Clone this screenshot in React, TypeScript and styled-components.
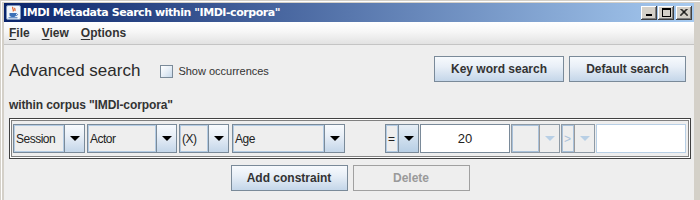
import React from 'react';
import styled, { createGlobalStyle } from 'styled-components';

const GlobalStyle = createGlobalStyle`
  html, body {
    margin: 0;
    padding: 0;
    background: #d4d0c8;
  }
  body {
    font-family: 'Liberation Sans', Arial, sans-serif;
  }
`;

const Frame = styled.div`
  width: 700px;
  height: 200px;
  box-sizing: border-box;
  padding: 3px 6px 0 4px;
  background: #d4d0c8;
  box-shadow: inset 1px 1px 0 #d4d0c8, inset 2px 2px 0 #fff;
  display: flex;
  flex-direction: column;
  overflow: hidden;
`;

const TitleBar = styled.div`
  height: 19px;
  display: flex;
  align-items: center;
  padding: 0 2px 0 2px;
  background: linear-gradient(to right, #0a246a 0%, #a6caf0 100%);
`;

const TitleText = styled.span`
  margin-left: 2px;
  color: #fff;
  font-family: 'DejaVu Sans', Verdana, sans-serif;
  font-weight: bold;
  font-size: 11px;
  letter-spacing: -0.45px;
  white-space: nowrap;
`;

const WinButtons = styled.div`
  margin-left: auto;
  display: flex;
  align-items: center;
`;

const WinButton = styled.div<{ $gap?: number }>`
  width: 16px;
  height: 14px;
  box-sizing: border-box;
  margin-left: ${p => p.$gap ?? 0}px;
  background: #d4d0c8;
  box-shadow: inset -1px -1px 0 #404040, inset 1px 1px 0 #fff, inset -2px -2px 0 #808080;
  display: flex;
  align-items: center;
  justify-content: center;
`;

const MenuBar = styled.div`
  height: 22px;
  display: flex;
  align-items: center;
  background: linear-gradient(to bottom, #ffffff 0%, #f6f6f6 45%, #e2e2e2 100%);
  border-bottom: 1px solid #c4c4c4;
`;

const MenuItem = styled.span`
  padding: 0 6px;
  font-size: 12px;
  font-weight: bold;
  color: #333;
  &:first-child {
    padding-left: 5px;
  }
  & > u {
    text-decoration-thickness: 1px;
    text-underline-offset: 2px;
  }
`;

const Body = styled.div`
  flex: 1;
  background: #eeeeee;
  padding: 11px 3px 0 5px;
  display: flex;
  flex-direction: column;
`;

const TopRow = styled.div`
  display: flex;
  align-items: center;
  height: 26px;
  padding-right: 5px;
`;

const Heading = styled.span`
  font-size: 17px;
  color: #2a2a2a;
  margin-top: 3px;
`;

const CheckBox = styled.span`
  width: 13px;
  height: 13px;
  box-sizing: border-box;
  margin-left: 20px;
  margin-top: 4px;
  border: 1px solid #7a8a99;
  background: linear-gradient(to bottom right, #ffffff 0%, #e6eef6 50%, #c6d8ea 100%);
`;

const CheckLabel = styled.span`
  margin-left: 5px;
  margin-top: 4px;
  font-size: 11px;
  color: #333;
`;

const ButtonGroup = styled.div`
  margin-left: auto;
  display: flex;
  gap: 5px;
`;

const Button = styled.button<{ $width: number; $disabled?: boolean }>`
  width: ${p => p.$width}px;
  height: 26px;
  box-sizing: border-box;
  padding: 0;
  border: 1px solid ${p => (p.$disabled ? '#a0a0a0' : '#7a8a99')};
  border-radius: 0;
  background: ${p =>
    p.$disabled
      ? '#eeeeee'
      : 'linear-gradient(to bottom, #f7fafd 0%, #e8eff7 40%, #c4d6e9 100%)'};
  font-family: 'Liberation Sans', Arial, sans-serif;
  font-size: 12px;
  font-weight: bold;
  color: ${p => (p.$disabled ? '#9a9a9a' : '#333')};
`;

const CorpusLabel = styled.div`
  margin-top: 16px;
  height: 14px;
  line-height: 14px;
  font-size: 12px;
  font-weight: bold;
  letter-spacing: -0.1px;
  color: #333;
`;

const Panel = styled.div`
  margin-top: 6px;
  border: 1px solid #404040;
  box-shadow: inset 0 0 0 1px #ffffff, inset 0 0 0 2px #808080;
  padding: 5px 3px 5px 3px;
  display: flex;
`;

const ComboBox = styled.div<{ $width: number; $gap: number; $disabled?: boolean }>`
  width: ${p => p.$width}px;
  margin-left: ${p => p.$gap}px;
  height: 29px;
  box-sizing: border-box;
  display: flex;
  border: 1px solid ${p => (p.$disabled ? '#8e9aa5' : '#7a8a99')};
  background: #eeeeee;
`;

const ComboText = styled.div<{ $disabled?: boolean }>`
  flex: 1;
  display: flex;
  align-items: center;
  padding-left: 2px;
  box-shadow: inset 0 0 0 1px ${p => (p.$disabled ? '#a9c1da' : '#b3cbe3')};
  font-size: 12px;
  letter-spacing: -0.5px;
  color: ${p => (p.$disabled ? '#a9c1da' : '#222')};
  white-space: nowrap;
  overflow: hidden;
`;

const ComboArrow = styled.div<{ $disabled?: boolean; $strong?: boolean }>`
  width: 19px;
  border-left: 1px solid ${p => (p.$disabled ? '#9a9a9a' : '#7a8a99')};
  display: flex;
  align-items: center;
  justify-content: center;
  background: ${p =>
    p.$disabled
      ? '#eeeeee'
      : p.$strong
      ? 'linear-gradient(to bottom, #e6eef6 0%, #b8cfe5 100%)'
      : 'linear-gradient(to bottom, #f7fafd 0%, #e8eff7 40%, #c4d6e9 100%)'};
`;

const Triangle = styled.span<{ $disabled?: boolean }>`
  width: 0;
  height: 0;
  border-left: 5px solid transparent;
  border-right: 5px solid transparent;
  border-top: 5px solid ${p => (p.$disabled ? '#b8cfe5' : '#000')};
`;

const TextField = styled.div<{ $width: number; $gap: number; $disabled?: boolean }>`
  width: ${p => p.$width}px;
  margin-left: ${p => p.$gap}px;
  height: 29px;
  box-sizing: border-box;
  border: 1px solid ${p => (p.$disabled ? '#b8cfe5' : '#7a8a99')};
  background: #fff;
  display: flex;
  align-items: center;
  justify-content: center;
  font-size: 13px;
  color: #222;
`;

const BottomRow = styled.div`
  margin-top: 6px;
  display: flex;
  justify-content: center;
  gap: 5px;
`;

const JavaIcon = () => (
  <svg width="15" height="15" viewBox="0 0 15 15">
    <rect x="0.5" y="0.5" width="14" height="14" rx="1.5" fill="#f2f6fb" stroke="#7c95bb" />
    <path d="M7 2 C5.5 3.5 8.5 4.5 7 6.5 M9 3 C8 4 9.8 4.6 8.8 6" stroke="#e05a1c" strokeWidth="1.2" fill="none" />
    <path d="M3.5 8 H10 V10 C10 11.5 8.8 12 7 12 C5 12 3.5 11.5 3.5 10 Z" fill="#3b6fb6" />
    <path d="M10 8.6 C12 8.6 12 10.6 10 10.6" stroke="#3b6fb6" strokeWidth="1" fill="none" />
    <path d="M2.5 12.8 H11.5" stroke="#3b6fb6" strokeWidth="1" />
  </svg>
);

const MinGlyph = () => (
  <svg width="8" height="7" viewBox="0 0 8 7">
    <rect x="1" y="5" width="6" height="2" fill="#000" />
  </svg>
);

const MaxGlyph = () => (
  <svg width="9" height="9" viewBox="0 0 9 9">
    <rect x="0.5" y="0.5" width="8" height="8" fill="none" stroke="#000" />
    <rect x="0" y="0" width="9" height="2" fill="#000" />
  </svg>
);

const CloseGlyph = () => (
  <svg width="8" height="7" viewBox="0 0 8 7">
    <path d="M0.5 0 L7.5 7 M1.5 0 L8 6.5 M7.5 0 L0.5 7 M6.5 0 L0 6.5" stroke="#000" strokeWidth="1" />
  </svg>
);

type ComboProps = {
  label: string;
  width: number;
  gap: number;
  disabled?: boolean;
  strong?: boolean;
};

const Combo: React.FC<ComboProps> = ({ label, width, gap, disabled, strong }) => (
  <ComboBox $width={width} $gap={gap} $disabled={disabled}>
    <ComboText $disabled={disabled}>{label}</ComboText>
    <ComboArrow $disabled={disabled} $strong={strong}>
      <Triangle $disabled={disabled} />
    </ComboArrow>
  </ComboBox>
);

const App: React.FC = () => {
  return (
    <>
      <GlobalStyle />
      <Frame>
        <TitleBar>
          <JavaIcon />
          <TitleText>IMDI Metadata Search within "IMDI-corpora"</TitleText>
          <WinButtons>
            <WinButton>
              <MinGlyph />
            </WinButton>
            <WinButton $gap={1}>
              <MaxGlyph />
            </WinButton>
            <WinButton $gap={2}>
              <CloseGlyph />
            </WinButton>
          </WinButtons>
        </TitleBar>

        <MenuBar>
          <MenuItem>
            <u>F</u>ile
          </MenuItem>
          <MenuItem>
            <u>V</u>iew
          </MenuItem>
          <MenuItem>
            <u>O</u>ptions
          </MenuItem>
        </MenuBar>

        <Body>
          <TopRow>
            <Heading>Advanced search</Heading>
            <CheckBox />
            <CheckLabel>Show occurrences</CheckLabel>
            <ButtonGroup>
              <Button $width={130}>Key word search</Button>
              <Button $width={117}>Default search</Button>
            </ButtonGroup>
          </TopRow>

          <CorpusLabel>within corpus "IMDI-corpora"</CorpusLabel>

          <Panel>
            <Combo label="Session" width={72} gap={0} />
            <Combo label="Actor" width={90} gap={2} />
            <Combo label="(X)" width={50} gap={2} />
            <Combo label="Age" width={113} gap={3} />
            <Combo label="=" width={34} gap={40} strong />
            <TextField $width={90} $gap={1}>20</TextField>
            <Combo label="" width={49} gap={1} disabled />
            <Combo label=">" width={34} gap={1} disabled />
            <TextField $width={90} $gap={1} $disabled />
          </Panel>

          <BottomRow>
            <Button $width={117}>Add constraint</Button>
            <Button $width={117} $disabled>
              Delete
            </Button>
          </BottomRow>
        </Body>
      </Frame>
    </>
  );
};

export default App;
